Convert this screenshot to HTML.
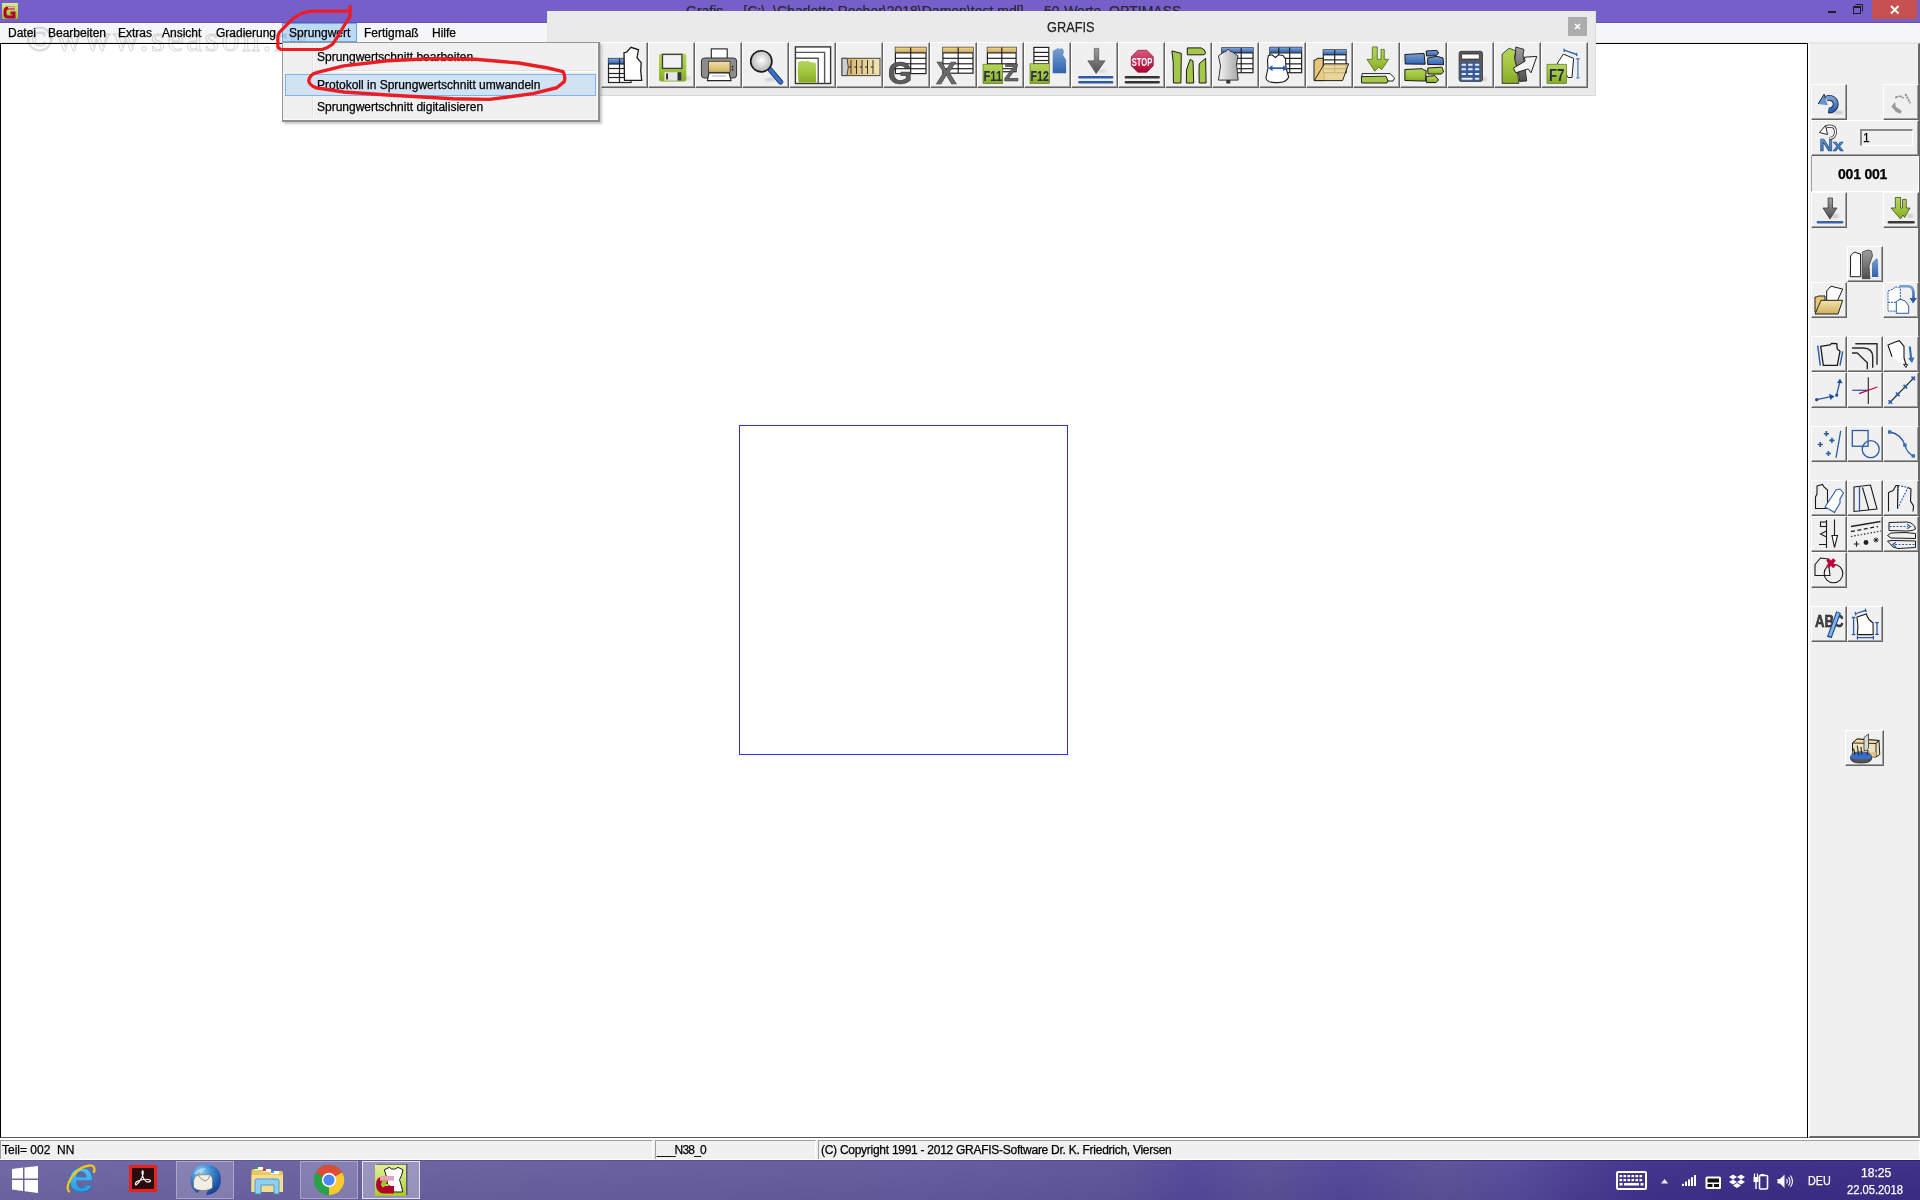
<!DOCTYPE html>
<html><head><meta charset="utf-8"><title>GRAFIS</title><style>
*{box-sizing:border-box;margin:0;padding:0}
html,body{width:1920px;height:1200px;overflow:hidden;background:#fff;font-family:"Liberation Sans",sans-serif;font-size:12px;color:#000}
.a{position:absolute}
.t{position:absolute;white-space:nowrap;line-height:14px;-webkit-text-stroke:0.25px currentColor}
.b{position:absolute;background:#f0f0f0;border-top:1px solid #fff;border-left:1px solid #fff;border-right:1px solid #646464;border-bottom:1px solid #646464;box-shadow:inset -1px -1px 0 #a0a0a0}
.b svg{position:absolute;left:-1px;top:-1px}
.sk{position:absolute;background:#f0f0f0;border-top:1px solid #a0a0a0;border-left:1px solid #a0a0a0;border-right:1px solid #fff;border-bottom:1px solid #fff}
</style></head><body>
<svg width="0" height="0" style="position:absolute"><defs>
<filter id="bl" x="-50%" y="-50%" width="200%" height="200%"><feGaussianBlur stdDeviation="1.2"/></filter>
<linearGradient id="gGreen" x1="0" y1="0" x2="0" y2="1"><stop offset="0" stop-color="#b6d45a"/><stop offset="0.5" stop-color="#a2c640"/><stop offset="1" stop-color="#86ab22"/></linearGradient>
<linearGradient id="gBlue" x1="0" y1="0" x2="0" y2="1"><stop offset="0" stop-color="#7aa0d0"/><stop offset="1" stop-color="#2f62b0"/></linearGradient>
<linearGradient id="gHdr" x1="0" y1="0" x2="0" y2="1"><stop offset="0" stop-color="#7fa6dc"/><stop offset="1" stop-color="#2c5fb0"/></linearGradient>
<linearGradient id="gGold" x1="0" y1="0" x2="0" y2="1"><stop offset="0" stop-color="#f4e2a8"/><stop offset="1" stop-color="#d0b060"/></linearGradient>
<linearGradient id="gGoldH" x1="0" y1="0" x2="0" y2="1"><stop offset="0" stop-color="#f0d890"/><stop offset="1" stop-color="#c8a050"/></linearGradient>
<linearGradient id="gGray" x1="0" y1="0" x2="1" y2="0"><stop offset="0" stop-color="#9a9a9a"/><stop offset="0.5" stop-color="#6e6e6e"/><stop offset="1" stop-color="#555"/></linearGradient>
<linearGradient id="gGrayV" x1="0" y1="0" x2="0" y2="1"><stop offset="0" stop-color="#a0a0a0"/><stop offset="1" stop-color="#4e4e4e"/></linearGradient>
<linearGradient id="gTape" x1="0" y1="0" x2="1" y2="0"><stop offset="0" stop-color="#d6b060"/><stop offset="1" stop-color="#f4e6b8"/></linearGradient>
<radialGradient id="gLens" cx="0.5" cy="0.45" r="0.5"><stop offset="0" stop-color="#fff"/><stop offset="1" stop-color="#b8b8b8"/></radialGradient>
<linearGradient id="gRed" x1="0" y1="0" x2="0" y2="1"><stop offset="0" stop-color="#d85a80"/><stop offset="1" stop-color="#b0002c"/></linearGradient>
<linearGradient id="gMan" x1="0" y1="0" x2="1" y2="0"><stop offset="0" stop-color="#f4f4f4"/><stop offset="1" stop-color="#a8a8a8"/></linearGradient>
</defs></svg>
<div class="a" style="left:0px;top:0px;width:1920px;height:23px;background:#765fc9;border-bottom:1px solid #6550b5"></div>
<div class="t" style="left:686px;top:3px;color:#2a2a2a;font-size:14px;line-height:16px">Grafis&nbsp;&nbsp;-&nbsp;&nbsp;[C:\..\Charlotte Rocher\2018\Damen\test.mdl]&nbsp;&nbsp;-&nbsp;&nbsp;50-Werte&nbsp;&nbsp;OPTIMASS</div>
<svg class="a" style="left:2px;top:3px" width="16" height="16" viewBox="0 0 16 16"><defs><linearGradient id="ig" x1="0" y1="0" x2="0" y2="1"><stop offset="0" stop-color="#d8ee90"/><stop offset="1" stop-color="#90c020"/></linearGradient></defs><rect x="0" y="0" width="16" height="16" fill="url(#ig)"/><path d="M12.5 5 H6 Q3 5 3 8.5 V10.5 Q3 14 6 14 H12 V10 H8.5" fill="none" stroke="#b2002c" stroke-width="3"/><path d="M6 4.5 H12.5" stroke="#f0b0c0" stroke-width="2"/></svg>
<div class="a" style="left:1828px;top:11px;width:8px;height:2px;background:#1e1e1e"></div>
<svg class="a" style="left:1852px;top:3px" width="14" height="13"><path d="M3.5 1.5 H10.5 V8.5" fill="none" stroke="#1e1e1e" stroke-width="1"/><rect x="1.5" y="3.5" width="7" height="7" fill="none" stroke="#1e1e1e" stroke-width="1"/><rect x="1" y="3" width="8" height="2" fill="#1e1e1e"/></svg>
<div class="a" style="left:1872px;top:0px;width:45px;height:19px;background:#c75050"></div>
<svg class="a" style="left:1889px;top:4px" width="12" height="11"><path d="M2 2 L9.5 9.5 M9.5 2 L2 9.5" stroke="#fff" stroke-width="1.9"/></svg>
<div class="a" style="left:0px;top:23px;width:1920px;height:20px;background:#f5f6f7;border-top:1px solid #fcfcfd;border-bottom:1px solid #e9eaeb"></div>
<div class="a" style="left:282px;top:23px;width:75px;height:19px;background:#bcdaf5;border:1px solid #66a7e8"></div>
<div class="t" style="left:8px;top:26px;">Datei</div>
<div class="t" style="left:48px;top:26px;">Bearbeiten</div>
<div class="t" style="left:118px;top:26px;">Extras</div>
<div class="t" style="left:162px;top:26px;">Ansicht</div>
<div class="t" style="left:216px;top:26px;">Gradierung</div>
<div class="t" style="left:289px;top:26px;">Sprungwert</div>
<div class="t" style="left:364px;top:26px;">Fertigmaß</div>
<div class="t" style="left:432px;top:26px;">Hilfe</div>
<div class="a" style="left:0px;top:43px;width:1808px;height:1095px;background:#fff;border:1px solid #000;border-bottom-color:#5a5a5a"></div>
<div class="t" style="left:26px;top:21px;font-family:'Liberation Serif',serif;font-size:36px;line-height:36px;color:transparent;-webkit-text-stroke:1px #d8d8d8;letter-spacing:2.6px;mix-blend-mode:multiply">©www.season.ru</div>
<div class="a" style="left:739px;top:425px;width:329px;height:330px;border:1px solid #2c2cf6"></div>
<div class="a" style="left:1808px;top:43px;width:112px;height:1095px;background:#f0f0f0;border-top:1px solid #e3e3e3;border-left:2px solid #fff;border-right:2px solid #696969;border-bottom:2px solid #696969"></div>
<div class="b" style="left:1811px;top:84px;width:36px;height:36px"><svg width="36" height="36" viewBox="0 0 36 36"><ellipse cx="27" cy="28.5" rx="5" ry="1.5" fill="#888" opacity="0.45" filter="url(#bl)"/><path d="M15.5 14.6 A6.3 6.3 0 1 1 17.4 26.4" fill="none" stroke="#1a2a48" stroke-width="5.8"/><path d="M15.5 14.6 A6.3 6.3 0 1 1 17.4 26.4" fill="none" stroke="url(#gBlue)" stroke-width="4"/><path d="M7.1 20 L13.1 10.25 L16.9 21.3 Z" fill="#6a92cc"/><path d="M7.1 20 L13.1 10.25 L14.5 14.5" fill="none" stroke="#1a2a48" stroke-width="1"/></svg></div>
<div class="b" style="left:1883px;top:84px;width:36px;height:36px"><svg width="36" height="36" viewBox="0 0 36 36"><path d="M12.2 13.8 Q14 12.5 17 12.3 Q19 12.3 20.5 14.2" fill="none" stroke="#8e8e8e" stroke-width="1.6" stroke-dasharray="3 0.8"/><path d="M22.3 10 L27.3 19.3" fill="none" stroke="#8e8e8e" stroke-width="1.9" stroke-dasharray="2.2 0.9"/><path d="M8.3 22.3 L12.3 18 L12.7 22.7 L18.7 26.7 L17.7 29.7 L13 28 Z" fill="#9a9a9a"/></svg></div>
<div class="a" style="left:1811px;top:120px;width:108px;height:36px;background:#f0f0f0;border-top:1px solid #fff;border-left:1px solid #fff;border-right:1px solid #646464;border-bottom:1px solid #646464;box-shadow:inset -1px -1px 0 #a0a0a0"></div>
<svg class="a" style="left:1811px;top:120px" width="36" height="36" viewBox="0 0 36 36"><text x="8.5" y="31" font-family="Liberation Sans" font-weight="bold" font-size="17" fill="url(#gBlue)" stroke="#24508f" stroke-width="0.6" textLength="24" lengthAdjust="spacingAndGlyphs">Nx</text><path d="M13.5 13 Q12 6.5 18.5 6 Q25 6 24.5 12.5 Q24 18 18.5 18.5" fill="none" stroke="#2a2a2a" stroke-width="3"/><path d="M13.5 13 Q12 6.5 18.5 6 Q25 6 24.5 12.5 Q24 18 18.5 18.5" fill="none" stroke="#fff" stroke-width="1.4"/><path d="M8.5 12.5 L14.5 5.5 L16.5 14.5 Z" fill="#fff" stroke="#2a2a2a" stroke-width="1"/></svg>
<div class="a" style="left:1860px;top:129px;width:53px;height:17px;background:#f0f0f0;border-top:2px solid #8a8a8a;border-left:2px solid #8a8a8a;border-right:1px solid #fff;border-bottom:1px solid #fff"></div>
<div class="t" style="left:1863px;top:131px;font-size:12px">1</div>
<div class="a" style="left:1811px;top:156px;width:108px;height:36px;background:#f0f0f0;border-left:1px solid #a0a0a0;border-right:1px solid #fff;border-bottom:1px solid #fff"></div>
<div class="t" style="left:1838px;top:166px;font-weight:bold;font-size:14px;line-height:16px;letter-spacing:-0.2px">001 001</div>
<div class="b" style="left:1811px;top:192px;width:36px;height:36px"><svg width="36" height="36" viewBox="0 0 36 36"><ellipse cx="24" cy="24" rx="4" ry="1.6" fill="#888" opacity="0.45" filter="url(#bl)"/><path d="M17.1 6 H21.5 V16 H25.9 L18.9 27 L12 16 H17.1 Z" fill="url(#gGrayV)" stroke="#2a2a2a" stroke-width="0.7"/><path d="M7 30.2 H31" stroke="#3a62a8" stroke-width="2.6" stroke-linecap="round"/></svg></div>
<div class="b" style="left:1883px;top:192px;width:36px;height:36px"><svg width="36" height="36" viewBox="0 0 36 36"><ellipse cx="27" cy="24" rx="3.5" ry="1.4" fill="#888" opacity="0.45" filter="url(#bl)"/><path d="M12.3 5.5 H17.6 V16 H19.5 V7.4 H23.25 V16 H27 L21.5 25.5 L20 23 L17.5 27 L8 16 H12.3 Z" fill="url(#gGreen)" stroke="#2a3a10" stroke-width="0.7"/><path d="M6 30.3 H30.5" stroke="#3a3a3a" stroke-width="2.6" stroke-linecap="round"/></svg></div>
<div class="b" style="left:1847px;top:246px;width:36px;height:36px"><svg width="36" height="36" viewBox="0 0 36 36"><path d="M3.5 10 L5.5 7.5 L8 6 L10 7 L13.5 8 L13.7 30.7 L3.3 30.7 L3.6 18 Z" fill="#fff" stroke="#1a1a1a" stroke-width="1"/><path d="M15.3 6 L21 4 L24.5 5 L25.5 10 L24 14 L22 20 L23 32.7 L15.3 32.7 Z" fill="url(#gGrayV)" stroke="#333" stroke-width="0.7"/><path d="M25 17 L29.5 12 L31 14 L31.3 31 L25 31 Z" fill="url(#gBlue)"/></svg></div>
<div class="b" style="left:1811px;top:282px;width:36px;height:36px"><svg width="36" height="36" viewBox="0 0 36 36"><path d="M15.7 9 L19 5 L21 4.2 L23 5 L31.7 7 L26.5 18.7 L15.7 18.7 Z" fill="#fff" stroke="#1a1a1a" stroke-width="1"/><path d="M4 15 H6 L7 14 H14 V30 H4 Z" fill="#e8c870" stroke="#222" stroke-width="1"/><path d="M10 18.3 H31.7 L27 32 H4 Z" fill="url(#gGold)" stroke="#222" stroke-width="1"/></svg></div>
<div class="b" style="left:1883px;top:282px;width:36px;height:36px"><svg width="36" height="36" viewBox="0 0 36 36"><path d="M5 9 L10.5 7 L12 4.7 L17.3 6 L17.3 17 L17 29.3 L5 29 Z" fill="#fff" stroke="#2c5aa8" stroke-width="1" stroke-dasharray="2 1"/><path d="M5 20.3 H17" stroke="#2c5aa8" stroke-width="1" stroke-dasharray="2 1"/><path d="M13.3 19.5 L17 17.3 L22 18.8 L25.7 24 V31.3 H13.3 Z" fill="#fff" stroke="#2c5aa8" stroke-width="1"/><path d="M16.3 4.2 H25 Q31 4.2 30.5 13 V17" fill="none" stroke="url(#gBlue)" stroke-width="2.6"/><path d="M26.5 16 H34 L30 21.5 Z" fill="#2c5aa8"/></svg></div>
<div class="b" style="left:1811px;top:336px;width:36px;height:36px"><svg width="36" height="36" viewBox="0 0 36 36"><path d="M9.7 10.3 L19 9 L20.7 7.3 L25.7 7.7 L26.3 13 L29 15.3 L26.3 29.3 L12.3 29.3 Z" fill="none" stroke="#1a1a1a" stroke-width="1.3"/><path d="M6.7 9.7 L9.3 29.7 M31.7 15.3 L29 29.7" stroke="#3060b0" stroke-width="1.5"/></svg></div>
<div class="b" style="left:1847px;top:336px;width:36px;height:36px"><svg width="36" height="36" viewBox="0 0 36 36"><path d="M8.3 7.7 H30 V28.7 M5 12 H16.3 Q25.7 12 25.7 21.3 V31.7 M5 17 H10.3 L20.3 26.7 V33.3" fill="none" stroke="#2a2a2a" stroke-width="1.4"/></svg></div>
<div class="b" style="left:1883px;top:336px;width:36px;height:36px"><svg width="36" height="36" viewBox="0 0 36 36"><path d="M5 9 L12.3 6 L16.3 4.7 L21 10.3 L21 22 L22.8 28 L20.3 28.7 L9 20.7 Z" fill="#fff" stroke="none"/><path d="M9 20.7 L5 9 L12.3 6 L16.3 4.7 L21 10.3 L21 22 L23 28.5" fill="none" stroke="#1a1a1a" stroke-width="1.1"/><path d="M20.5 28.2 L24.5 28.5 L23 31.5 Z" fill="#fff" stroke="#1a1a1a" stroke-width="1"/><path d="M26.8 10.5 L28.2 23" stroke="#3a6cb8" stroke-width="2.2"/><path d="M25 22 L31.5 21.5 L29 27 Z" fill="#3a6cb8"/></svg></div>
<div class="b" style="left:1811px;top:372px;width:36px;height:36px"><svg width="36" height="36" viewBox="0 0 36 36"><path d="M5.7 27.7 L20 24.7" stroke="#2c5aa8" stroke-width="1.3"/><path d="M18 21.8 L23.5 24.2 L19.5 28 Z" fill="#1e4e98"/><circle cx="5.7" cy="27.7" r="1.6" fill="#1e4e98"/><rect x="24.3" y="21.8" width="2.8" height="2.8" fill="#1e4e98"/><path d="M25.7 22.5 L28.8 10" stroke="#2c5aa8" stroke-width="1.3"/><path d="M26 11 L29 6.5 L31.5 11.2 Z" fill="#1e4e98"/></svg></div>
<div class="b" style="left:1847px;top:372px;width:36px;height:36px"><svg width="36" height="36" viewBox="0 0 36 36"><path d="M21.3 5.3 V32" stroke="#222" stroke-width="1.1"/><path d="M5.3 18.3 H21" stroke="#2c5aa8" stroke-width="1.3"/><path d="M12 21.7 L30.3 15" stroke="#c0003c" stroke-width="1.3"/></svg></div>
<div class="b" style="left:1883px;top:372px;width:36px;height:36px"><svg width="36" height="36" viewBox="0 0 36 36"><path d="M7.3 30 L30.3 6.3" stroke="#222" stroke-width="1.1"/><path d="M5.5 28.2 L9.1 31.8 M9.1 28.2 L5.5 31.8" stroke="#2c5aa8" stroke-width="1.6"/><path d="M12.899999999999999 20.5 L16.5 24.1 M16.5 20.5 L12.899999999999999 24.1" stroke="#2c5aa8" stroke-width="1.6"/><path d="M20.5 12.899999999999999 L24.1 16.5 M24.1 12.899999999999999 L20.5 16.5" stroke="#2c5aa8" stroke-width="1.6"/><path d="M28.5 4.5 L32.1 8.1 M32.1 4.5 L28.5 8.1" stroke="#2c5aa8" stroke-width="1.6"/></svg></div>
<div class="b" style="left:1811px;top:426px;width:36px;height:36px"><svg width="36" height="36" viewBox="0 0 36 36"><path d="M12.8 7.7 H18.0 M15.4 5.1 V10.3" stroke="#2c5aa8" stroke-width="1.6"/><path d="M18.299999999999997 14.4 H23.5 M20.9 11.8 V17.0" stroke="#2c5aa8" stroke-width="1.6"/><path d="M6.65 18.5 H11.85 M9.25 15.9 V21.1" stroke="#2c5aa8" stroke-width="1.6"/><path d="M14.799999999999999 27.5 H20.0 M17.4 24.9 V30.1" stroke="#2c5aa8" stroke-width="1.6"/><path d="M29.7 4.8 L25 31.9" stroke="#2c5aa8" stroke-width="1.3"/></svg></div>
<div class="b" style="left:1847px;top:426px;width:36px;height:36px"><svg width="36" height="36" viewBox="0 0 36 36"><rect x="5.3" y="4.5" width="15.8" height="15.75" fill="none" stroke="#2c5aa8" stroke-width="1.3"/><circle cx="23.7" cy="23.2" r="8.5" fill="none" stroke="#2c5aa8" stroke-width="1.3"/></svg></div>
<div class="b" style="left:1883px;top:426px;width:36px;height:36px"><svg width="36" height="36" viewBox="0 0 36 36"><path d="M6.7 6 Q18 8 21.9 19.1 Q24 27 30.3 29.9" fill="none" stroke="#2c5aa8" stroke-width="1.3"/><rect x="5" y="4.3" width="3.4" height="3.4" fill="#3a6cb8"/><rect x="20.2" y="17.4" width="3.4" height="3.4" fill="#3a6cb8"/><rect x="28.6" y="28.2" width="3.4" height="3.4" fill="#3a6cb8"/></svg></div>
<div class="b" style="left:1811px;top:480px;width:36px;height:36px"><svg width="36" height="36" viewBox="0 0 36 36"><path d="M6 6 L11.5 4.5 L13 7 L16.5 10 L16.5 28.5 L4.5 28.5 L4.5 17 L6 14 Z" fill="none" stroke="#1a1a1a" stroke-width="1.1"/><path d="M14 27 L22.5 14 L25 10 L29 9 L32.5 13 L29 19 L29 23 L23.5 32.5 Z" fill="#fff" stroke="#2c5aa8" stroke-width="1.1"/></svg></div>
<div class="b" style="left:1847px;top:480px;width:36px;height:36px"><svg width="36" height="36" viewBox="0 0 36 36"><path d="M7 7 L23.5 5 L30 29 L7 31.5 Z" fill="none" stroke="#1a1a1a" stroke-width="1.1"/><path d="M15.5 7.5 L22 30" stroke="#1a1a1a" stroke-width="1.1"/><path d="M12.5 7 V31.5" stroke="#2c5aa8" stroke-width="1.3"/></svg></div>
<div class="b" style="left:1883px;top:480px;width:36px;height:36px"><svg width="36" height="36" viewBox="0 0 36 36"><path d="M15 5.5 L25 7.5 L14.5 28.5 Z" fill="#fff" stroke="#2c5aa8" stroke-width="1.1" stroke-dasharray="2 1.2"/><path d="M5.5 31.5 V12.5 L10 10.5 L13 5.5 L15 5.5 M14.5 28.5 L15 5.5 M25 7.5 L28 9 L27.5 21 L30.5 26 L30 31.5" fill="none" stroke="#1a1a1a" stroke-width="1.1"/></svg></div>
<div class="b" style="left:1811px;top:516px;width:36px;height:36px"><svg width="36" height="36" viewBox="0 0 36 36"><path d="M15.5 4 V32 M8 28.5 H15.5 M15.5 15 L9.5 18 L15.5 21" fill="none" stroke="#1a1a1a" stroke-width="1.1"/><rect x="9.5" y="6" width="6" height="4.5" fill="none" stroke="#1a1a1a" stroke-width="1.1"/><path d="M23.5 3.5 V25" stroke="#1a1a1a" stroke-width="1.1"/><path d="M21 19.5 H26.5 L23.5 31.5 Z" fill="#fff" stroke="#1a1a1a" stroke-width="1.1"/></svg></div>
<div class="b" style="left:1847px;top:516px;width:36px;height:36px"><svg width="36" height="36" viewBox="0 0 36 36"><path d="M4 10.5 L33.5 5.5" stroke="#222" stroke-width="1.3"/><path d="M4 15.5 L31 10.5" stroke="#222" stroke-width="1.3" stroke-dasharray="4 2.5"/><path d="M4 20.5 L34 15" stroke="#222" stroke-width="1.1" stroke-dasharray="1.5 1.8"/><path d="M6.8 28 H12.2 M9.5 25.3 V30.7" stroke="#222" stroke-width="1.1"/><circle cx="19" cy="26.5" r="2.4" fill="#222"/><path d="M26.5 24 H31.5 M29 21.5 V26.5 M27.2 22.2 L30.8 25.8 M30.8 22.2 L27.2 25.8" stroke="#222" stroke-width="1"/></svg></div>
<div class="b" style="left:1883px;top:516px;width:36px;height:36px"><svg width="36" height="36" viewBox="0 0 36 36"><path d="M6 6.5 L24 6 L28 7 Q33 10 32.5 13 Q30 15 24 15 L6 14.5 Z" fill="none" stroke="#1a1a1a" stroke-width="1"/><path d="M6.5 10.5 H25" stroke="#2c5aa8" stroke-width="1.1" stroke-dasharray="2 1.5"/><path d="M24 8.3 L27.5 10.5 L24 12.7" fill="none" stroke="#2c5aa8" stroke-width="1.1"/><path d="M4.5 19.5 L8 17 L22 16.5 L32.5 17.5 V22.5 L8 22 Z" fill="none" stroke="#1a1a1a" stroke-width="1"/><path d="M4.5 25 L10 24.5 L32.5 25 V31.5 L15 32.5 L10 31 Z" fill="none" stroke="#1a1a1a" stroke-width="1"/><path d="M12 28.5 H31.5" stroke="#2c5aa8" stroke-width="1.1" stroke-dasharray="2 1.5"/><path d="M13 26.3 L9.5 28.5 L13 30.7" fill="none" stroke="#2c5aa8" stroke-width="1.1"/></svg></div>
<div class="b" style="left:1811px;top:552px;width:36px;height:36px"><svg width="36" height="36" viewBox="0 0 36 36"><path d="M4 12.5 L9.5 6 L17 7 L19 23.5 L4 23.5 Z" fill="none" stroke="#1a1a1a" stroke-width="1.1"/><circle cx="22.5" cy="21.5" r="9.3" fill="none" stroke="#1a1a1a" stroke-width="1.1"/><path d="M16.5 7.5 L23.5 15 M23.5 7.5 L16.5 15" stroke="#c0003c" stroke-width="3.6"/></svg></div>
<div class="b" style="left:1811px;top:606px;width:36px;height:36px"><svg width="36" height="36" viewBox="0 0 36 36"><text x="4" y="20.7" font-family="Liberation Sans" font-weight="bold" font-size="17" fill="#444" stroke="#111" stroke-width="0.5" textLength="28.5" lengthAdjust="spacingAndGlyphs">ABC</text><path d="M27.6 6.1 L18.3 31.5" stroke="#1e4e98" stroke-width="5"/><path d="M27.3 7 L18.8 30" stroke="#8ab4e8" stroke-width="2.6"/></svg></div>
<div class="b" style="left:1847px;top:606px;width:36px;height:36px"><svg width="36" height="36" viewBox="0 0 36 36"><path d="M10 11.1 L19.3 8 Q21 14 26 16.7 L26.2 28.6 L10.4 28.6 Q11.6 20 10 11.1 Z" fill="#fff" stroke="#1a1a1a" stroke-width="1.1"/><path d="M6.6 11.5 V28.6 M4.8 11.5 H8.4 M4.8 28.6 H8.4 M30 16.7 V28.4 M28.2 16.7 H31.8 M28.2 28.4 H31.8 M10.4 31.7 H26.4 M10.4 30 V33.4 M26.4 30 V33.4 M8.5 7.75 L18.7 4.4 M8 6 L9 9.5 M18.2 2.7 L19.2 6.1" fill="none" stroke="#2c5aa8" stroke-width="1.3"/></svg></div>
<div class="b" style="left:1845px;top:730px;width:39px;height:36px"><svg width="39" height="36" viewBox="0 0 39 36"><path d="M7.5 13 L12 9 L34 10.5 L34.75 24.5 L31 27 L7.5 26 Z" fill="#ece2c0" stroke="#1a1a1a" stroke-width="1"/><path d="M7.5 13 L12 9 L34 10.5 L31 13.5 Z" fill="#f2dc98" stroke="#1a1a1a" stroke-width="0.9"/><path d="M31 13.5 V27 M31 13.5 L34 10.5" stroke="#1a1a1a" stroke-width="0.9"/><path d="M7.5 21 L31 22 V27 L7.5 26 Z" fill="#dcc27a" opacity="0.8"/><path d="M19 7.5 L23.5 4 V18 L21.5 20.5 L19 20.5 Z" fill="#d8d8d8" stroke="#333" stroke-width="0.8"/><path d="M5.5 28 Q5.5 22 16 22 Q26.75 22 26.75 28 Q26.75 33 16 33 Q5.5 33 5.5 28 Z" fill="#555" stroke="#222" stroke-width="0.8"/><path d="M5.5 27 Q5.5 22 16 22 Q26.75 22 26.75 27 Q26.75 29 16 29.5 Q5.5 29 5.5 27 Z" fill="#3a6cc8"/><path d="M8.5 18.5 L10 24.5 M12.25 15.75 L13.75 25.5 M16 17 L16.75 24.5 M23 20 L22.25 25" stroke="#222" stroke-width="1.1"/></svg></div>
<div class="a" style="left:0px;top:1138px;width:1920px;height:22px;background:#f0f0f0;border-top:2px solid #fff;border-bottom:1px solid #fff"></div>
<div class="a" style="left:0px;top:1140px;width:653px;height:19px;border-top:1px solid #a0a0a0;border-left:1px solid #a0a0a0;border-right:1px solid #fff"></div>
<div class="a" style="left:655px;top:1140px;width:161px;height:19px;border-top:1px solid #a0a0a0;border-left:1px solid #a0a0a0;border-right:1px solid #fff"></div>
<div class="a" style="left:818px;top:1140px;width:1102px;height:19px;border-top:1px solid #a0a0a0;border-left:1px solid #a0a0a0;border-right:1px solid #fff"></div>
<div class="t" style="left:2px;top:1143px;">Teil= 002&nbsp;&nbsp;NN</div>
<div class="t" style="left:657px;top:1143px;letter-spacing:-0.8px">___N38_0</div>
<div class="t" style="left:821px;top:1143px;letter-spacing:-0.27px">(C) Copyright 1991 - 2012 GRAFIS-Software Dr. K. Friedrich, Viersen</div>
<div class="a" style="left:0px;top:1160px;width:1920px;height:40px;background:linear-gradient(180deg,rgba(255,255,255,0.03),rgba(0,0,0,0.03)),linear-gradient(90deg,#6b65a2 0%,#67609f 25%,#625a9c 47%,#5d5498 58%,#52479a 62%,#5a5096 66%,#51469a 70%,#5a5196 75%,#54499a 79%,#4a3d92 82%,#3f3089 86%,#3c2d86 92%,#3b2c84 100%)"></div>
<div class="a" style="left:0px;top:1160px;width:1920px;height:1px;background:linear-gradient(90deg,#5a5490 0%,#4a4288 60%,#231966 85%,#24186a 100%);opacity:0.7"></div>
<svg class="a" style="left:12px;top:1166px" width="27" height="27" viewBox="0 0 27 27"><path d="M0 3 L11 1.6 V12.5 H0 Z M12.5 1.4 L26 0 V12.5 H12.5 Z M0 14 H11 V25 L0 23.6 Z M12.5 14 H26 V27 L12.5 25.3 Z" fill="#fff"/></svg>
<svg class="a" style="left:65px;top:1163px" width="32" height="32" viewBox="0 0 32 32"><defs><linearGradient id="ieg" x1="0" y1="0" x2="0" y2="1"><stop offset="0" stop-color="#7ad8fa"/><stop offset="1" stop-color="#1a8ad8"/></linearGradient></defs><text x="3" y="29" font-family="Liberation Sans" font-weight="bold" font-size="44" fill="url(#ieg)" stroke="#1478c0" stroke-width="0.6" textLength="26" lengthAdjust="spacingAndGlyphs">e</text><path d="M4 28.5 Q0.5 25 6 15 Q13 4 24 2.5 Q31 2 29 9" fill="none" stroke="#f2c818" stroke-width="2.3" stroke-linecap="round"/></svg>
<div class="a" style="left:129px;top:1165px;width:28px;height:27px;background:#2b0c0c;border:3px solid #e8231e"></div>
<svg class="a" style="left:132px;top:1168px" width="22" height="21" viewBox="0 0 22 21"><path d="M4 17 Q2 15 6 13 Q13 10 18 12 Q20 14 15 14 Q11 12 10 5 Q10 2 11 3 Q12 6 9 11 Q7 15 4 17 Z" fill="none" stroke="#fff" stroke-width="1.1"/></svg>
<div class="a" style="left:176px;top:1161px;width:58px;height:38px;background:rgba(255,255,255,0.18);border:1px solid rgba(255,255,255,0.3)"></div>
<div class="a" style="left:300px;top:1161px;width:58px;height:38px;background:rgba(255,255,255,0.18);border:1px solid rgba(255,255,255,0.3)"></div>
<div class="a" style="left:362px;top:1161px;width:58px;height:38px;background:rgba(255,255,255,0.32);border:1px solid rgba(255,255,255,0.75)"></div>
<svg class="a" style="left:189px;top:1163px" width="34" height="34" viewBox="0 0 34 34"><defs><radialGradient id="tbg" cx="0.35" cy="0.25" r="0.8"><stop offset="0" stop-color="#8ad0f4"/><stop offset="0.45" stop-color="#3a86d0"/><stop offset="1" stop-color="#163c90"/></radialGradient></defs><path d="M8 30 Q1 25 1.5 16 Q2.5 5 13 1.5 Q24 0 30 8 Q34 16 30 25 Q26 31.5 17 32 L19 27 L12 27 Z" fill="url(#tbg)"/><path d="M5 11 Q9 4.5 17 5.5 Q14 8 11 11 Z" fill="#b8e4f8" opacity="0.7"/><path d="M4.5 18 Q5 13 9 12 L21 11.5 Q24 14 23.5 19 L23.5 24.5 Q21 27.5 13 27.5 Q6 27 4.5 24 Z" fill="#f2eee4" stroke="#6a6a6a" stroke-width="0.6"/><path d="M9 12 Q12 17 16 18 Q20 17 21 11.5" fill="none" stroke="#7a7a7a" stroke-width="0.8"/><circle cx="10" cy="10.5" r="0.9" fill="#f09020"/></svg>
<svg class="a" style="left:251px;top:1166px" width="33" height="30" viewBox="0 0 33 30"><path d="M0.5 5 Q0.5 3 3 3 H10 L12 5 H30 Q32 5 32 7 V26 H0.5 Z" fill="#e8c864"/><rect x="4" y="1" width="8" height="3" fill="#fff"/><rect x="4" y="1" width="3" height="2" fill="#20b040"/><rect x="12" y="3" width="8" height="3" fill="#fff"/><rect x="12" y="3" width="3" height="2" fill="#e03020"/><rect x="20" y="5" width="8" height="3" fill="#fff"/><rect x="20" y="5" width="3" height="2" fill="#30a0f0"/><path d="M0.5 9 H32 V26 H0.5 Z" fill="#f4dc90"/><path d="M4 28 V15 Q4 13 6 13 H26 Q28 13 28 15 V28 H23 V19 H10 V28 Z" fill="#8cd0f4" stroke="#3a8cc8" stroke-width="0.8"/></svg>
<svg class="a" style="left:313px;top:1164px" width="32" height="32" viewBox="0 0 32 32"><circle cx="16" cy="16" r="15.2" fill="#2aa048"/><path d="M16 16 L2.8 8.4 A15.2 15.2 0 0 1 29.2 8.4 Z" fill="#dd4b39"/><path d="M16 16 L29.2 8.4 A15.2 15.2 0 0 1 16 31.2 Z" fill="#fcc934"/><path d="M16 16 L2.8 8.4 L9.5 19.8 Z" fill="#2aa048"/><circle cx="16" cy="16" r="7.2" fill="#fff"/><circle cx="16" cy="16" r="5.6" fill="#4a88f0"/></svg>
<svg class="a" style="left:375px;top:1164px" width="33" height="33" viewBox="0 0 33 33"><defs><linearGradient id="tg" x1="0" y1="0" x2="0" y2="1"><stop offset="0" stop-color="#e2ee90"/><stop offset="0.5" stop-color="#c6e070"/><stop offset="1" stop-color="#a8d018"/></linearGradient></defs><rect x="1.5" y="0" width="31" height="31" fill="#333" opacity="0.6"/><rect x="0" y="0.8" width="31" height="31" fill="url(#tg)"/><path d="M9.25 5.8 L14.3 3.3 Q16.5 5.5 18.75 5.2 Q21 5 22.9 3.3 L27.9 5.8 L26.7 11.2 L24.5 15.6 L26.7 22.9 L27.6 28 L19.4 28 L13 20 L10.8 10.25 Z" fill="#fff" stroke="#1a1a1a" stroke-width="1"/><path d="M19 25.8 H9 Q4.8 25.8 4.8 20.5 Q4.8 16.2 8.5 16.2 H13" fill="none" stroke="#b2002a" stroke-width="7.6"/><rect x="5" y="12" width="14" height="4.8" fill="#e4a4b4"/><path d="M8.5 16.5 Q6 17 6 20.5 Q6 23 9 23.5 L12.5 17 Z" fill="#98c828"/><rect x="13" y="16.8" width="6.2" height="3.8" fill="#fff"/></svg>
<svg class="a" style="left:1616px;top:1171px" width="32" height="20" viewBox="0 0 32 20"><rect x="1" y="1" width="29" height="17" rx="1" fill="none" stroke="#fff" stroke-width="2"/><rect x="3.5" y="4" width="2.6" height="2.2" fill="#fff"/><rect x="3.5" y="8" width="2.6" height="2.2" fill="#fff"/><rect x="7.5" y="4" width="2.6" height="2.2" fill="#fff"/><rect x="7.5" y="8" width="2.6" height="2.2" fill="#fff"/><rect x="11.5" y="4" width="2.6" height="2.2" fill="#fff"/><rect x="11.5" y="8" width="2.6" height="2.2" fill="#fff"/><rect x="15.5" y="4" width="2.6" height="2.2" fill="#fff"/><rect x="15.5" y="8" width="2.6" height="2.2" fill="#fff"/><rect x="19.5" y="4" width="2.6" height="2.2" fill="#fff"/><rect x="19.5" y="8" width="2.6" height="2.2" fill="#fff"/><rect x="23.5" y="4" width="2.6" height="2.2" fill="#fff"/><rect x="23.5" y="8" width="2.6" height="2.2" fill="#fff"/><rect x="3.5" y="12" width="3" height="2.5" fill="#fff"/><rect x="8" y="12" width="15" height="2.5" fill="#fff"/><rect x="24.5" y="12" width="3" height="2.5" fill="#fff"/></svg>
<svg class="a" style="left:1660px;top:1178px" width="10" height="7"><path d="M1 5.5 L4.6 1 L8.2 5.5 Z" fill="#e8e8f0"/></svg>
<svg class="a" style="left:1681px;top:1175px" width="17" height="12" viewBox="0 0 17 12"><rect x="1" y="8.8" width="2" height="2.2" fill="#fff"/><rect x="4" y="6.6" width="2" height="4.4" fill="#fff"/><rect x="7" y="4.3999999999999995" width="2" height="6.6000000000000005" fill="#fff"/><rect x="10" y="2.1999999999999993" width="2" height="8.8" fill="#fff"/><rect x="13" y="0.0" width="2" height="11.0" fill="#fff"/></svg>
<svg class="a" style="left:1705px;top:1176px" width="17" height="14" viewBox="0 0 17 14"><rect x="0.5" y="0.5" width="15.5" height="12.5" rx="1.5" fill="#fff"/><rect x="2.5" y="2.5" width="11.5" height="4" fill="#111"/><rect x="2.5" y="8" width="5" height="3" fill="#111"/><rect x="9" y="8" width="5" height="3" fill="#111"/></svg>
<svg class="a" style="left:1729px;top:1174px" width="16" height="14" viewBox="0 0 16 14"><path d="M4 0.5 L8 3 L4 5.5 L0 3 Z M12 0.5 L16 3 L12 5.5 L8 3 Z M4 5.5 L8 8 L4 10.5 L0 8 Z M12 5.5 L16 8 L12 10.5 L8 8 Z M8 9 L12 11.5 L8 14 L4 11.5 Z" fill="#fff"/></svg>
<svg class="a" style="left:1753px;top:1173px" width="16" height="17" viewBox="0 0 16 17"><path d="M1.5 0.5 V4 M4.5 0.5 V4" stroke="#fff" stroke-width="1.2"/><rect x="0.5" y="4" width="5" height="5" fill="#fff"/><rect x="2.3" y="9" width="1.4" height="7" fill="#fff"/><rect x="7.5" y="1" width="4" height="2" fill="#fff"/><rect x="6.5" y="2.5" width="8" height="13.5" rx="1" fill="none" stroke="#fff" stroke-width="1.6"/></svg>
<svg class="a" style="left:1777px;top:1174px" width="17" height="15" viewBox="0 0 17 15"><path d="M0.5 5 H3 L7.5 0.5 V14 L3 9.5 H0.5 Z" fill="#fff"/><path d="M9.5 5 Q11 7.3 9.5 9.5 M11.5 3 Q14.5 7.3 11.5 11.5 M13.5 1.5 Q17.5 7.3 13.5 13" fill="none" stroke="#fff" stroke-width="1.1"/></svg>
<div class="t" style="left:1808px;top:1174px;color:#fff;transform:scaleX(0.9);transform-origin:0 0">DEU</div>
<div class="t" style="left:1861px;top:1165px;color:#fff;font-size:13px;line-height:15px;transform:scaleX(0.93);transform-origin:0 0">18:25</div>
<div class="t" style="left:1847px;top:1182px;color:#fff;font-size:13px;line-height:15px;transform:scaleX(0.86);transform-origin:0 0">22.05.2018</div>
<div class="a" style="left:547px;top:11px;width:1049px;height:85px;background:#eaeaea;border-left:1px solid #e4e4e0;border-top:1px solid #e8e8e4;border-right:1px solid #dcdcdc;border-bottom:1px solid #d6d6d6"></div>
<div class="t" style="left:1047px;top:18px;font-size:15px;line-height:17px;color:#222;transform:scaleX(0.85);transform-origin:0 0">GRAFIS</div>
<div class="a" style="left:1568px;top:17px;width:19px;height:19px;background:#acacac"></div>
<svg class="a" style="left:1568px;top:17px" width="19" height="19"><path d="M7 7 L12 12 M12 7 L7 12" stroke="#fff" stroke-width="1.6"/></svg>
<div class="b" style="left:601px;top:42px;width:47px;height:46px"><svg width="47" height="46" viewBox="0 0 47 46"><rect x="7.5" y="16.5" width="22.5" height="24" fill="#fff" stroke="#222" stroke-width="1.2"/><rect x="7.5" y="16.5" width="22.5" height="5.5" fill="url(#gHdr)"/><path d="M7.5 22 H30.0" stroke="#222" stroke-width="1.2"/><path d="M7.5 26.5 H30.0" stroke="#222" stroke-width="1.2"/><path d="M7.5 31.5 H30.0" stroke="#222" stroke-width="1.2"/><path d="M7.5 35.5 H30.0" stroke="#222" stroke-width="1.2"/><path d="M18.5 16.5 V40.5" stroke="#222" stroke-width="1.2"/><path d="M23 10.8 L25.7 10 L30 5.3 L37.5 7.8 L36 15.7 L40.2 20.6 L39.7 28.8 L40.7 38.4 L23.5 38.4 Z" fill="#fff" stroke="#1a1a1a" stroke-width="1.3"/></svg></div>
<div class="b" style="left:648px;top:42px;width:47px;height:46px"><svg width="47" height="46" viewBox="0 0 47 46"><ellipse cx="38" cy="36" rx="5" ry="2" fill="#bbb" opacity="0.45" filter="url(#bl)"/><rect x="11" y="11.5" width="27.3" height="28" rx="2.5" fill="url(#gGreen)"/><rect x="14.5" y="12.4" width="19.4" height="14" fill="#f2f2f6" stroke="#3a3a3a" stroke-width="1.3"/><rect x="16.4" y="30.2" width="17" height="8.4" fill="#e6e6ea"/><rect x="18.2" y="31.5" width="1.8" height="6" fill="#222"/><rect x="29.5" y="30.2" width="3.9" height="8.4" fill="#333"/></svg></div>
<div class="b" style="left:695px;top:42px;width:47px;height:46px"><svg width="47" height="46" viewBox="0 0 47 46"><rect x="16.3" y="6.9" width="15.9" height="11" fill="#fff" stroke="#222" stroke-width="1.1"/><rect x="6.4" y="16" width="35.2" height="20" rx="3" fill="#8c8c8c" stroke="#333" stroke-width="1"/><rect x="13.4" y="19.3" width="21.7" height="11" fill="url(#gGold)" stroke="#333" stroke-width="0.8"/><path d="M14 31 H34 L36.1 38.6 H12.4 Z" fill="#fff" stroke="#222" stroke-width="1.1"/><path d="M17 34 H31" stroke="#aaa" stroke-width="1"/><circle cx="37.6" cy="24.7" r="0.9" fill="#222"/><circle cx="37.6" cy="27.7" r="0.9" fill="#222"/></svg></div>
<div class="b" style="left:742px;top:42px;width:47px;height:46px"><svg width="47" height="46" viewBox="0 0 47 46"><ellipse cx="28" cy="37.6" rx="5" ry="1.6" fill="#999" opacity="0.45" filter="url(#bl)"/><path d="M28.2 27.7 L38.6 40" stroke="#1d3f80" stroke-width="5.2" stroke-linecap="round"/><path d="M28.2 27.7 L38.6 40" stroke="#3c70c0" stroke-width="3.4" stroke-linecap="round"/><circle cx="19.3" cy="19.3" r="10.6" fill="url(#gLens)" stroke="#1a1a1a" stroke-width="1.6"/></svg></div>
<div class="b" style="left:789px;top:42px;width:47px;height:46px"><svg width="47" height="46" viewBox="0 0 47 46"><rect x="6.4" y="4.9" width="35.2" height="36.6" fill="#fff" stroke="#333" stroke-width="1.4"/><path d="M6.4 10.4 H35.6 V41.5" fill="none" stroke="#555" stroke-width="1.4"/><path d="M6.4 16.3 H29.2 V41.5" fill="none" stroke="#555" stroke-width="1.4"/><path d="M9 20 L13 18.8 L16 19.5 L19 18.5 L21 20 L26.8 21 L27.2 40.4 L9.5 40.6 L8.7 30 Z" fill="url(#gGreen)"/></svg></div>
<div class="b" style="left:836px;top:42px;width:47px;height:46px"><svg width="47" height="46" viewBox="0 0 47 46"><rect x="6" y="16.3" width="38" height="17.3" fill="url(#gTape)" stroke="#444" stroke-width="1"/><path d="M6 16.3 H11 Q13.5 25 11 33.6 H6 Z" fill="#cfcfcf" stroke="#444" stroke-width="1"/><path d="M15 18 V32" stroke="#333" stroke-width="1"/><path d="M20.5 18 V32" stroke="#333" stroke-width="1"/><path d="M26 18 V32" stroke="#333" stroke-width="1"/><path d="M31.5 18 V32" stroke="#333" stroke-width="1"/><path d="M37 18 V32" stroke="#333" stroke-width="1"/><path d="M12.8 25 H15" stroke="#333" stroke-width="1.2"/><path d="M18.3 25 H20.5" stroke="#333" stroke-width="1.2"/><path d="M23.8 25 H26" stroke="#333" stroke-width="1.2"/><path d="M29.3 25 H31.5" stroke="#333" stroke-width="1.2"/><path d="M34.8 25 H37" stroke="#333" stroke-width="1.2"/></svg></div>
<div class="b" style="left:883px;top:42px;width:47px;height:46px"><svg width="47" height="46" viewBox="0 0 47 46"><rect x="12.4" y="5.4" width="30.6" height="26.2" fill="#fff" stroke="#222" stroke-width="1.2"/><rect x="12.4" y="5.4" width="30.6" height="5.5" fill="url(#gGoldH)"/><path d="M12.4 10.9 H43.0" stroke="#222" stroke-width="1.2"/><path d="M12.4 16.3 H43.0" stroke="#222" stroke-width="1.2"/><path d="M12.4 21.8 H43.0" stroke="#222" stroke-width="1.2"/><path d="M12.4 26.7 H43.0" stroke="#222" stroke-width="1.2"/><path d="M27.7 5.4 V31.6" stroke="#222" stroke-width="1.2"/><text x="5" y="42" font-family="Liberation Sans" font-weight="bold" font-size="31" fill="#5c5c5c" stroke="#333" stroke-width="0.6">G</text></svg></div>
<div class="b" style="left:930px;top:42px;width:47px;height:46px"><svg width="47" height="46" viewBox="0 0 47 46"><rect x="12.9" y="5.4" width="30.1" height="25.8" fill="#fff" stroke="#222" stroke-width="1.2"/><rect x="12.9" y="5.4" width="30.1" height="5.5" fill="url(#gGoldH)"/><path d="M12.9 10.9 H43.0" stroke="#222" stroke-width="1.2"/><path d="M12.9 16.3 H43.0" stroke="#222" stroke-width="1.2"/><path d="M12.9 21.8 H43.0" stroke="#222" stroke-width="1.2"/><path d="M12.9 26.7 H43.0" stroke="#222" stroke-width="1.2"/><path d="M28.2 5.4 V31.200000000000003" stroke="#222" stroke-width="1.2"/><text x="6" y="42" font-family="Liberation Sans" font-weight="bold" font-size="31" fill="#6a6a6a" stroke="#444" stroke-width="0.5">X</text></svg></div>
<div class="b" style="left:977px;top:42px;width:47px;height:46px"><svg width="47" height="46" viewBox="0 0 47 46"><rect x="10.4" y="5.4" width="28.7" height="24.3" fill="#fff" stroke="#222" stroke-width="1.2"/><rect x="10.4" y="5.4" width="28.7" height="5.5" fill="url(#gGoldH)"/><path d="M10.4 10.9 H39.1" stroke="#222" stroke-width="1.2"/><path d="M10.4 16.3 H39.1" stroke="#222" stroke-width="1.2"/><path d="M10.4 21.8 H39.1" stroke="#222" stroke-width="1.2"/><path d="M10.4 26.7 H39.1" stroke="#222" stroke-width="1.2"/><path d="M24.8 5.4 V29.700000000000003" stroke="#222" stroke-width="1.2"/><text x="27" y="38.5" font-family="Liberation Sans" font-weight="bold" font-size="24" fill="#666" stroke="#333" stroke-width="0.5">Z</text><rect x="6" y="22.2" width="19.7" height="19.3" fill="url(#gGreen)" stroke="#4a6a10" stroke-width="0.6"/><text x="6.6" y="38.6" font-family="Liberation Sans" font-weight="bold" font-size="15.5" fill="#252a48" textLength="18.5" lengthAdjust="spacingAndGlyphs">F11</text></svg></div>
<div class="b" style="left:1024px;top:42px;width:47px;height:46px"><svg width="47" height="46" viewBox="0 0 47 46"><rect x="9.9" y="5.4" width="14.9" height="16.4" fill="#fff" stroke="#222" stroke-width="1.2"/><rect x="9.9" y="5.4" width="14.9" height="0" fill="#fff"/><path d="M9.9 10.4 H24.8" stroke="#222" stroke-width="1.2"/><path d="M9.9 14.5 H24.8" stroke="#222" stroke-width="1.2"/><path d="M9.9 18.5 H24.8" stroke="#222" stroke-width="1.2"/><path d="M28.7 9 L34 5.9 L36 7 L38 6 L40 9 L39 13 L42.1 18 L42.1 31.2 L28.7 31.2 Z" fill="url(#gBlue)"/><rect x="6" y="21.8" width="19.3" height="19.7" fill="url(#gGreen)" stroke="#4a6a10" stroke-width="0.6"/><text x="6.4" y="38.6" font-family="Liberation Sans" font-weight="bold" font-size="15.5" fill="#252a48" textLength="18.5" lengthAdjust="spacingAndGlyphs">F12</text></svg></div>
<div class="b" style="left:1071px;top:42px;width:47px;height:46px"><svg width="47" height="46" viewBox="0 0 47 46"><ellipse cx="31" cy="29" rx="4" ry="1.5" fill="#aaa" opacity="0.45" filter="url(#bl)"/><path d="M23.3 6.4 H27.7 V18.8 H34.1 L25.2 31.6 L16.8 18.8 H23.3 Z" fill="url(#gGrayV)" stroke="#444" stroke-width="0.6"/><path d="M8.4 35.3 H41.1 M8.4 40.2 H41.1" stroke="#2c5aa8" stroke-width="2.6" stroke-linecap="round"/></svg></div>
<div class="b" style="left:1118px;top:42px;width:47px;height:46px"><svg width="47" height="46" viewBox="0 0 47 46"><path d="M19.8 8.3 H28.8 L35.3 14.8 V23.8 L28.8 30.3 H19.8 L13.3 23.8 V14.8 Z" fill="url(#gRed)" stroke="#7a0020" stroke-width="0.6"/><text x="13.8" y="23.8" font-family="Liberation Sans" font-weight="bold" font-size="11.5" fill="#fff" textLength="20.5" lengthAdjust="spacingAndGlyphs">STOP</text><path d="M7.9 35.3 H40.6 M7.9 40.2 H40.6" stroke="#333" stroke-width="2.6" stroke-linecap="round"/></svg></div>
<div class="b" style="left:1165px;top:42px;width:47px;height:46px"><svg width="47" height="46" viewBox="0 0 47 46"><g fill="#a5c84a" stroke="#1a1a1a" stroke-width="1"><path d="M6.9 8.9 L16.3 11.4 L15.9 41 L8.4 41 L8.2 20 Z"/><path d="M22.3 5.9 H36 Q40 7 40.6 11 Q40 12.8 38 12.8 H22.3 Z"/><path d="M25.2 17.3 L28 19 L28.7 41 L21.3 41 L21.5 28 Z"/><path d="M34.2 21.8 L40.6 16.3 L41.1 41 L34.2 41 L34 30 Z"/></g></svg></div>
<div class="b" style="left:1212px;top:42px;width:47px;height:46px"><svg width="47" height="46" viewBox="0 0 47 46"><rect x="9.9" y="5.9" width="31.1" height="24.8" fill="#fff" stroke="#222" stroke-width="1.2"/><rect x="9.9" y="5.9" width="31.1" height="5" fill="url(#gHdr)"/><path d="M9.9 10.9 H41.0" stroke="#222" stroke-width="1.2"/><path d="M9.9 16.3 H41.0" stroke="#222" stroke-width="1.2"/><path d="M9.9 21.8 H41.0" stroke="#222" stroke-width="1.2"/><path d="M9.9 26.7 H41.0" stroke="#222" stroke-width="1.2"/><path d="M29.2 5.9 V30.700000000000003" stroke="#222" stroke-width="1.2"/><path d="M16.3 6.9 L18.5 9.5 L20.5 10 L26 13.8 L24.5 22 L26.2 38.1 L6.5 38.1 L8.5 24 L6.5 13.8 L12 10 L14.1 9.5 Z" fill="url(#gMan)" stroke="#333" stroke-width="1"/><rect x="14.3" y="38.1" width="4" height="3.4" fill="#333"/></svg></div>
<div class="b" style="left:1259px;top:42px;width:47px;height:46px"><svg width="47" height="46" viewBox="0 0 47 46"><rect x="10.9" y="5.4" width="31.7" height="25.3" fill="#fff" stroke="#222" stroke-width="1.2"/><rect x="10.9" y="5.4" width="31.7" height="5" fill="url(#gHdr)"/><path d="M10.9 10.9 H42.6" stroke="#222" stroke-width="1.2"/><path d="M10.9 16.3 H42.6" stroke="#222" stroke-width="1.2"/><path d="M10.9 21.8 H42.6" stroke="#222" stroke-width="1.2"/><path d="M10.9 26.7 H42.6" stroke="#222" stroke-width="1.2"/><path d="M19.8 5.4 V30.700000000000003" stroke="#222" stroke-width="1.2"/><path d="M30.7 5.4 V30.700000000000003" stroke="#222" stroke-width="1.2"/><path d="M9.5 13.5 L13 12.8 L16.5 15.5 L19.5 12.8 L24 13.5 L26.5 17 L27 26 L29.7 35 Q27 41 18 40.6 Q8 41 6.9 36 L9 26 L8.5 18 Z" fill="#fff" stroke="#1a1a1a" stroke-width="1.1"/><path d="M11.5 26.2 H26" stroke="#2c5aa8" stroke-width="1.8"/><path d="M9.4 26.2 L13.5 23.2 V29.2 Z M28.2 26.2 L24.1 23.2 V29.2 Z" fill="#2c5aa8"/></svg></div>
<div class="b" style="left:1306px;top:42px;width:47px;height:46px"><svg width="47" height="46" viewBox="0 0 47 46"><path d="M8 18 H10 L11 16.3 H18 V38.6 H8 Z" fill="#e8c878" stroke="#222" stroke-width="1"/><rect x="17.3" y="7.9" width="22.8" height="22.8" fill="#fff" stroke="#222" stroke-width="1.2"/><rect x="17.3" y="7.9" width="22.8" height="4.9" fill="url(#gHdr)"/><path d="M17.3 12.8 H40.1" stroke="#222" stroke-width="1.2"/><path d="M17.3 17.9 H40.1" stroke="#222" stroke-width="1.2"/><path d="M17.3 22.9 H40.1" stroke="#222" stroke-width="1.2"/><path d="M17.3 26.7 H40.1" stroke="#222" stroke-width="1.2"/><path d="M28.7 7.9 V30.700000000000003" stroke="#222" stroke-width="1.2"/><path d="M18.3 21.8 H42.6 L36.6 38.6 H8.4 Z" fill="#e8cf8a" fill-opacity="0.85" stroke="#222" stroke-width="1"/></svg></div>
<div class="b" style="left:1353px;top:42px;width:47px;height:46px"><svg width="47" height="46" viewBox="0 0 47 46"><path d="M9 31.6 L37 31.6 L41.6 36 L40 39.1 L9 38 Z" fill="#fff" stroke="#222" stroke-width="1"/><path d="M8.4 34.6 L33 34.2 L35 39 L34 41 L8.6 41 Z" fill="#a5c84a" stroke="#222" stroke-width="1"/><path d="M19.3 4.9 H24.3 V17.3 H28 V7.4 H31.3 V17.3 H35.6 L28.7 27.7 L26 25 L21.8 29.2 L13.9 17.3 H19.3 Z" fill="url(#gGreen)" stroke="#3a5a10" stroke-width="0.7"/></svg></div>
<div class="b" style="left:1400px;top:42px;width:47px;height:46px"><svg width="47" height="46" viewBox="0 0 47 46"><g stroke="#1a1a1a" stroke-width="1"><path d="M4.9 12.5 L24 11.4 L25.2 22.2 L5.2 22 Z" fill="url(#gBlue)"/><path d="M26.2 9 L37 8.4 L38.6 11 L36 13.8 L26.5 14 Z" fill="url(#gBlue)"/><path d="M27.7 16 L37 14.3 L43 16 L43.6 22.7 L27.7 22.5 Z" fill="url(#gBlue)"/><path d="M4.9 27.5 L22 26.7 L24 28 L26.2 28.5 L25.5 39.1 L4.9 38.5 Z" fill="url(#gGreen)"/><path d="M27.7 26 L42 25.2 L43.6 30 L41 32.1 L28 32 Z" fill="url(#gGreen)"/><path d="M26.2 34.5 L35 33.6 L38.6 38 L36 40.6 L26.5 40.6 Z" fill="url(#gGreen)"/></g></svg></div>
<div class="b" style="left:1447px;top:42px;width:47px;height:46px"><svg width="47" height="46" viewBox="0 0 47 46"><ellipse cx="36" cy="37" rx="4" ry="1.6" fill="#999" opacity="0.45" filter="url(#bl)"/><rect x="12.1" y="9.3" width="23.4" height="30.1" rx="2" fill="#5a5a5a" stroke="#333" stroke-width="0.8"/><rect x="14.5" y="12" width="17.9" height="5.1" rx="0.8" fill="#fff" stroke="#222" stroke-width="0.8"/><rect x="14.0" y="21.099999999999998" width="5.6" height="3.2" rx="1" fill="#e8ecf6" stroke="#2c5aa8" stroke-width="1.1"/><rect x="20.599999999999998" y="21.099999999999998" width="5.6" height="3.2" rx="1" fill="#e8ecf6" stroke="#2c5aa8" stroke-width="1.1"/><rect x="27.3" y="21.099999999999998" width="5.6" height="3.2" rx="1" fill="#e8ecf6" stroke="#2c5aa8" stroke-width="1.1"/><rect x="14.0" y="25.7" width="5.6" height="3.2" rx="1" fill="#e8ecf6" stroke="#2c5aa8" stroke-width="1.1"/><rect x="20.599999999999998" y="25.7" width="5.6" height="3.2" rx="1" fill="#e8ecf6" stroke="#2c5aa8" stroke-width="1.1"/><rect x="27.3" y="25.7" width="5.6" height="3.2" rx="1" fill="#e8ecf6" stroke="#2c5aa8" stroke-width="1.1"/><rect x="14.0" y="30.4" width="5.6" height="3.2" rx="1" fill="#e8ecf6" stroke="#2c5aa8" stroke-width="1.1"/><rect x="20.599999999999998" y="30.4" width="5.6" height="3.2" rx="1" fill="#e8ecf6" stroke="#2c5aa8" stroke-width="1.1"/><rect x="27.3" y="30.4" width="5.6" height="3.2" rx="1" fill="#e8ecf6" stroke="#2c5aa8" stroke-width="1.1"/><rect x="14" y="35.1" width="12.2" height="3.2" rx="1" fill="#e8ecf6" stroke="#2c5aa8" stroke-width="1.1"/><rect x="27.3" y="35.1" width="5.6" height="3.2" rx="1" fill="#e8ecf6" stroke="#2c5aa8" stroke-width="1.1"/></svg></div>
<div class="b" style="left:1494px;top:42px;width:47px;height:46px"><svg width="47" height="46" viewBox="0 0 47 46"><path d="M8.1 12.1 L15.1 6.2 L21.75 8.9 L20.5 15 L22 21 L24.9 41.4 L8.1 41.4 Z" fill="url(#gGreen)" stroke="#222" stroke-width="0.8"/><path d="M21.75 5 L30 7.4 L29 13 L30.2 20 L31.5 30 L32.7 39 L25.7 39.4 L24 28 L20.8 18 L21.5 12 Z" fill="url(#gGrayV)" stroke="#222" stroke-width="0.9"/><path d="M19.4 26.1 L31.1 19.1 L30.3 15.2 L42.8 14.4 L37 30.8 L34.25 26.9 L21.75 30.8 Z" fill="#f4f4f4" stroke="#222" stroke-width="1"/></svg></div>
<div class="b" style="left:1541px;top:42px;width:47px;height:46px"><svg width="47" height="46" viewBox="0 0 47 46"><path d="M16.2 21.4 L22.4 12.1 L32.6 16.4 L31 35.5 L27 35.5 L20 24 Z" fill="#fff" stroke="#222" stroke-width="1"/><path d="M23.2 8.2 L35.7 12.5 M23 6.6 L23.4 9.8 M35.5 10.9 L35.9 14.1" stroke="#3a66b0" stroke-width="1.4"/><path d="M36.9 16.75 V35.9 M35.2 16.75 H38.6 M35.2 35.9 H38.6" stroke="#5a82c0" stroke-width="1.4"/><rect x="6" y="22.2" width="19.5" height="19.2" fill="url(#gGreen)" stroke="#4a6a10" stroke-width="0.6"/><text x="8" y="38.6" font-family="Liberation Sans" font-weight="bold" font-size="16" fill="#252a48" textLength="15.5" lengthAdjust="spacingAndGlyphs">F7</text></svg></div>
<div class="a" style="left:284px;top:44px;width:318px;height:80px;background:rgba(0,0,0,0.22);filter:blur(1.2px)"></div>
<div class="a" style="left:282px;top:42px;width:318px;height:80px;background:#f0f0f0;border-left:1px solid #979797;border-top:1px solid #979797;border-right:2px solid #8e8e8e;border-bottom:2px solid #8e8e8e;box-shadow:inset -1px -1px 0 #fafafa"></div>
<div class="a" style="left:312px;top:45px;width:1px;height:73px;background:#e2e2e2;box-shadow:1px 0 0 #fff"></div>
<div class="a" style="left:313px;top:70px;width:283px;height:1px;background:#e2e2e2;box-shadow:0 1px 0 #fff"></div>
<div class="a" style="left:285px;top:74px;width:311px;height:22px;background:#d1e2f3;border:1px solid #7fb2e8"></div>
<div class="t" style="left:317px;top:50px;">Sprungwertschnitt bearbeiten</div>
<div class="t" style="left:317px;top:78px;">Protokoll in Sprungwertschnitt umwandeln</div>
<div class="t" style="left:317px;top:100px;">Sprungwertschnitt digitalisieren</div>
<svg class="a" style="left:0;top:0" width="700" height="130" viewBox="0 0 700 130"><path d="M308.75 80.5 Q310 74 317.5 72.4 L343.75 65.9 L387.5 60.8 L431.25 58.6 L475 59.3 L518.75 63 L548 68 L563 71.7 Q566 77 564 81.9 L556.7 87.75 L533 93.6 L489.6 99.4 L453 98.7 L387.5 95 L343.75 92 L316 87.75 Q309 85 308.75 80.5 Z" fill="none" stroke="#ec1c24" stroke-width="3.4" stroke-linejoin="round"/><path d="M350.2 5.2 V13 M350.2 11.2 L312.7 11.2 Q305 12 301.25 13.5 L293.4 18.2 L285.6 26 L279.4 32.3 Q277.8 35 277.8 39 V46.9 Q279 49.5 283 49.5 L322 49.5 Q328 48 332.5 44.3 L337.7 36.5 L345.5 23.4 L349.7 17.2 L350.2 13" fill="none" stroke="#ec1c24" stroke-width="3.2" stroke-linejoin="round"/></svg>
</body></html>
